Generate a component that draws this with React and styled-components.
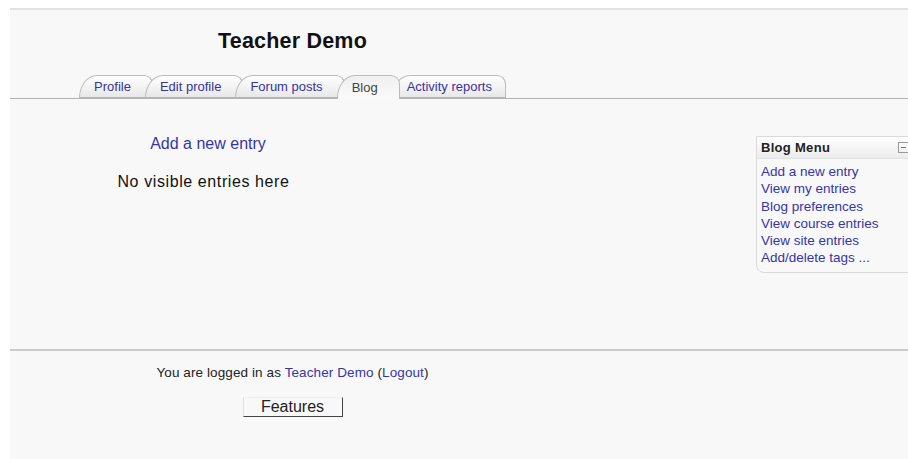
import React from 'react'
import styled, { createGlobalStyle } from 'styled-components'

const GlobalStyle = createGlobalStyle`
    html, body {
        margin: 0;
        padding: 0;
        background: #fff;
        overflow: hidden;
    }
    body {
        font-family: "Liberation Sans", Arial, sans-serif;
        color: #222;
    }
`

const Page = styled.div`
    margin: 8px 0 0 10px;
    border-top: 2px solid #e2e2e2;
    background: #f8f8f8;
    height: 449px;
    display: flex;
    flex-direction: column;
`

const Column = styled.div`
    width: 565px;
    display: flex;
    flex-direction: column;
    align-items: center;
`

const Header = styled.header`
    padding-top: 19px;
`

const Title = styled.h1`
    margin: 0 0 21px;
    font-size: 21.5px;
    line-height: 25px;
    font-weight: bold;
    letter-spacing: 0.2px;
    color: #111;
`

const TabBar = styled.nav`
    border-bottom: 1px solid #b4b4b4;
    height: 23px;
`

const TabList = styled.div`
    display: flex;
    justify-content: center;
    height: 23px;
`

const Tab = styled.a`
    position: relative;
    z-index: ${p => p.$index};
    height: ${p => (p.$active ? '24px' : '23px')};
    margin-left: ${p => (p.$first ? '0' : '-8px')};
    padding: 0 ${p => (p.$last ? 13 : 21)}px 0 14px;
    box-sizing: border-box;
    display: flex;
    align-items: center;
    border: 1px solid #bcbcbc;
    border-bottom: ${p => (p.$active ? 'none' : '1px solid #b4b4b4')};
    border-radius: 18px 9px 0 0 / 23px 9px 0 0;
    background: ${p => (p.$active
        ? 'linear-gradient(#f0f0f0, #fafafa)'
        : 'linear-gradient(#ffffff, #e8e8e8)')};
    font-size: 13px;
    color: ${p => (p.$active ? '#444' : '#35359c')};
    text-decoration: none;
    white-space: nowrap;
    cursor: pointer;
`

const Main = styled.main`
    flex: 1;
    display: flex;
    align-items: flex-start;
`

const Content = styled.section`
    width: 396px;
    padding-top: 35px;
    text-align: center;
    font-size: 16px;
    line-height: 19px;
`

const Link = styled.a`
    color: #3535a8;
    text-decoration: none;
`

const Empty = styled.p`
    margin: 19px 0 0;
    padding-right: 9px;
    color: #111;
    letter-spacing: 0.6px;
`

const SideBlock = styled.aside`
    margin: 37px -22px 0 auto;
    width: 172px;
    border: 1px solid #dadada;
    border-radius: 0 0 8px 8px;
    background: #f8f8f8;
`

const BlockHeader = styled.div`
    height: 21px;
    padding: 0 4px;
    display: flex;
    align-items: center;
    justify-content: space-between;
    background: linear-gradient(#ffffff, #ececec);
    border-bottom: 1px solid #e2e2e2;
    font-size: 13px;
    font-weight: bold;
    letter-spacing: 0.3px;
    color: #222;
`

const Toggle = styled.span`
    width: 9px;
    height: 9px;
    margin-right: 16px;
    border: 1px solid #999;
    display: flex;
    align-items: center;
    justify-content: center;
    &::before {
        content: '';
        width: 5px;
        height: 1px;
        background: #777;
    }
`

const BlockList = styled.ul`
    margin: 0;
    padding: 4px 4px 5px;
    list-style: none;
    font-size: 13.5px;
    line-height: 17.3px;
`

const Footer = styled.footer`
    height: 108px;
    border-top: 2px solid #cacaca;
    font-size: 13.5px;
`

const LoginInfo = styled.div`
    margin-top: 14px;
    line-height: 16px;
    color: #222;
    letter-spacing: 0.1px;
`

const FeatureButton = styled.button`
    margin-top: 16px;
    width: 100px;
    height: 20px;
    padding: 0;
    font-family: inherit;
    font-size: 16px;
    color: #222;
    background: #f8f8f8;
    border: 1px solid;
    border-color: #f0f0f0 #444 #444 #e0e0e0;
`

const tabs = [
    { label: 'Profile' },
    { label: 'Edit profile' },
    { label: 'Forum posts' },
    { label: 'Blog', active: true },
    { label: 'Activity reports' },
]

const menu = [
    'Add a new entry',
    'View my entries',
    'Blog preferences',
    'View course entries',
    'View site entries',
    'Add/delete tags ...',
]

export default function App() {
    return (
        <>
            <GlobalStyle />
            <Page>
                <Header>
                    <Column>
                        <Title>Teacher Demo</Title>
                    </Column>
                </Header>

                <TabBar>
                    <Column>
                        <TabList>
                            {tabs.map((tab, i) => (
                                <Tab
                                    key={tab.label}
                                    $index={tab.active ? 20 : i + 1}
                                    $first={i === 0}
                                    $last={i === tabs.length - 1}
                                    $active={tab.active}
                                >
                                    {tab.label}
                                </Tab>
                            ))}
                        </TabList>
                    </Column>
                </TabBar>

                <Main>
                    <Content>
                        <Link href="#">Add a new entry</Link>
                        <Empty>No visible entries here</Empty>
                    </Content>

                    <SideBlock>
                        <BlockHeader>
                            Blog Menu
                            <Toggle />
                        </BlockHeader>
                        <BlockList>
                            {menu.map(item => (
                                <li key={item}><Link href="#">{item}</Link></li>
                            ))}
                        </BlockList>
                    </SideBlock>
                </Main>

                <Footer>
                    <Column>
                        <LoginInfo>
                            You are logged in as <Link href="#">Teacher Demo</Link> (<Link href="#">Logout</Link>)
                        </LoginInfo>
                        <FeatureButton>Features</FeatureButton>
                    </Column>
                </Footer>
            </Page>
        </>
    )
}
